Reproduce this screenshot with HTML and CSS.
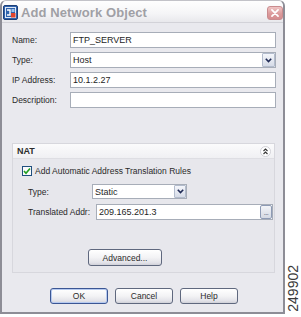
FILE: index.html
```html
<!DOCTYPE html>
<html>
<head>
<meta charset="utf-8">
<link rel="stylesheet" href="styles.css">
</head>
<body>
<div class="page">
  <div class="window">
    <div class="titlebar">
      <svg class="app-icon" width="15" height="15" viewBox="0 0 15 15">
        <rect x="0.5" y="0.5" width="14" height="14" rx="1.5" fill="#2f63ad" stroke="#1d3f78"/>
        <rect x="2.5" y="2.5" width="10" height="10" fill="none" stroke="#dfe8f6" stroke-width="1"/>
        <path d="M4 5h3v5H4" fill="none" stroke="#ffffff" stroke-width="1.4"/>
        <rect x="8" y="8" width="4.5" height="4.5" fill="#e0452f"/>
        <rect x="8.5" y="4" width="3" height="3" fill="#9cc3ee"/>
      </svg>
      <span class="title">Add Network Object</span>
      <span class="close">
        <svg width="16" height="14" viewBox="0 0 16 14">
          <path d="M4.5 3.5l7 7M11.5 3.5l-7 7" stroke="#ffffff" stroke-width="2" stroke-linecap="round"/>
        </svg>
      </span>
    </div>
    <div class="content">
      <div class="form">
        <span class="label">Name:</span>
        <div class="field">FTP_SERVER</div>
        <span class="label">Type:</span>
        <div class="field select">Host<span class="drop"><svg width="7" height="5" viewBox="0 0 7 5"><path d="M0.8 0.8L3.5 3.6L6.2 0.8" fill="none" stroke="#1f2a55" stroke-width="1.6"/></svg></span></div>
        <span class="label">IP Address:</span>
        <div class="field">10.1.2.27</div>
        <span class="label">Description:</span>
        <div class="field"></div>
      </div>
      <div class="nat">
        <div class="nat-head">
          <span class="nat-title">NAT</span>
          <span class="collapse">
            <svg width="11" height="11" viewBox="0 0 11 11">
              <circle cx="5.5" cy="5.5" r="5" fill="#ffffff" stroke="#d0d0d6"/>
              <path d="M3.5 5L5.5 3L7.5 5M3.5 8L5.5 6L7.5 8" fill="none" stroke="#333" stroke-width="1.1"/>
            </svg>
          </span>
        </div>
        <div class="nat-body">
          <div class="check-row">
            <span class="checkbox">
              <svg width="8" height="8" viewBox="0 0 8 8"><path d="M1 4l2 2.2L7 1.5" fill="none" stroke="#22a022" stroke-width="1.7"/></svg>
            </span>
            <span>Add Automatic Address Translation Rules</span>
          </div>
          <div class="nat-row type-row">
            <span class="label nat-label1">Type:</span>
            <div class="field select small">Static<span class="drop"><svg width="7" height="5" viewBox="0 0 7 5"><path d="M0.8 0.8L3.5 3.6L6.2 0.8" fill="none" stroke="#1f2a55" stroke-width="1.6"/></svg></span></div>
          </div>
          <div class="nat-row addr-row">
            <span class="label nat-label2">Translated Addr:</span>
            <div class="field addr">209.165.201.3<span class="ellipsis">...</span></div>
          </div>
          <div class="adv-row">
            <button class="btn adv">Advanced...</button>
          </div>
        </div>
      </div>
      <div class="buttons">
        <button class="btn default">OK</button>
        <button class="btn">Cancel</button>
        <button class="btn">Help</button>
      </div>
    </div>
  </div>
  <div class="fig-id">249902</div>
</div>
</body>
</html>
```

FILE: styles.css
```css
html, body {
  margin: 0;
  padding: 0;
  background: #ffffff;
}
body {
  font-family: "Liberation Sans", Arial, sans-serif;
  font-size: 8.5px;
  color: #2a2a2a;
}
.page {
  display: flex;
  align-items: flex-start;
  width: 301px;
  height: 317px;
}
.window {
  box-sizing: border-box;
  width: 285px;
  height: 314px;
  border: 2px solid #8d8d96;
  border-top: 1px solid #c2c2c8;
  border-radius: 6px 6px 0 0;
  background: #e9e9ee;
  display: flex;
  flex-direction: column;
}
.titlebar {
  height: 22px;
  display: flex;
  align-items: center;
  background: linear-gradient(#fefefe, #f5f5f7 60%, #e8e8ec);
  border-radius: 5px 5px 0 0;
  border-bottom: 1px solid #d2d2d8;
  box-sizing: border-box;
}
.app-icon {
  margin-left: 1px;
  margin-top: 1px;
  flex: none;
}
.title {
  margin-left: 3px;
  font-weight: bold;
  font-size: 13px;
  color: #a0a0a5;
  letter-spacing: 0.1px;
  flex: 1;
  margin-top: 1px;
}
.close {
  width: 16px;
  height: 14px;
  margin-top: 3px;
  box-sizing: border-box;
  border: 1px solid #c98b8e;
  border-radius: 3px;
  background: linear-gradient(#efc4c4, #dc9b9c 55%, #d58d8f);
  display: flex;
  align-items: center;
  justify-content: center;
}
.close svg {
  display: block;
}
.content {
  padding: 9px 7px 0 10px;
  display: flex;
  flex-direction: column;
}
.form {
  display: grid;
  grid-template-columns: 58px 1fr;
  grid-auto-rows: 16px;
  row-gap: 4px;
  align-items: center;
}
.label {
  font-size: 8.5px;
  color: #2a2a2a;
}
.field {
  box-sizing: border-box;
  height: 16px;
  background: #ffffff;
  border: 1px solid #a7adb8;
  font-size: 9px;
  color: #1e1e1e;
  padding-left: 2px;
  display: flex;
  align-items: center;
  position: relative;
}
.select .drop {
  position: absolute;
  right: 0px;
  top: 0px;
  width: 13px;
  height: 14px;
  box-sizing: border-box;
  border: 1px solid #b3bccd;
  border-radius: 1px;
  background: linear-gradient(#f4f6fb, #d6dbe7);
  display: flex;
  align-items: center;
  justify-content: center;
}
.drop svg {
  display: block;
}
.nat {
  margin-top: 35px;
  margin-right: 1px;
  border: 1px solid #d7d7dd;
  background: #e7e7ec;
  display: flex;
  flex-direction: column;
}
.nat-head {
  display: flex;
  align-items: center;
  justify-content: space-between;
  background: linear-gradient(#fbfbfc, #f0f0f3);
  border-bottom: 1px solid #dedee3;
  box-sizing: border-box;
  height: 15px;
}
.nat-title {
  font-weight: bold;
  font-size: 9px;
  margin-left: 4px;
  color: #2c2c2c;
}
.collapse {
  margin-right: 3px;
  display: flex;
}
.collapse svg {
  display: block;
}
.nat-body {
  padding: 6px 1px 6px 9px;
  display: flex;
  flex-direction: column;
}
.check-row {
  display: flex;
  align-items: center;
  gap: 2px;
  height: 11px;
  font-size: 8.5px;
}
.checkbox {
  box-sizing: border-box;
  width: 10px;
  height: 10px;
  background: #fbfbfb;
  border: 1px solid #1f4f7e;
  display: flex;
  align-items: center;
  justify-content: center;
  margin-right: 1px;
}
.checkbox svg {
  display: block;
}
.nat-row {
  display: flex;
  align-items: center;
  margin-left: 6px;
}
.type-row {
  margin-top: 8px;
}
.nat-label1 {
  width: 64px;
}
.nat-label2 {
  width: 68px;
}
.field.small {
  width: 95px;
  height: 15px;
}
.field.small .drop {
  height: 13px;
  width: 12px;
}
.addr-row {
  margin-top: 5px;
}
.field.addr {
  width: 177px;
}
.ellipsis {
  position: absolute;
  right: 0px;
  top: 0px;
  width: 12px;
  height: 14px;
  box-sizing: border-box;
  border: 1px solid #8e9bb5;
  border-radius: 2px;
  background: linear-gradient(#f3f4f8, #d5d9e3);
  font-size: 7px;
  color: #4a5470;
  line-height: 14px;
  text-align: center;
  letter-spacing: -0.5px;
}
.adv-row {
  margin-top: 29px;
  padding-left: 66px;
  display: flex;
}
.btn {
  font-family: "Liberation Sans", Arial, sans-serif;
  font-size: 8.5px;
  color: #2a2a2a;
  box-sizing: border-box;
  height: 16px;
  width: 58px;
  padding: 0;
  border: 1px solid #5f687e;
  border-radius: 3px;
  background: linear-gradient(#ffffff, #f3f3f5 50%, #e2e2e8 85%, #cfd0d8);
}
.btn.adv {
  width: 74px;
  height: 17px;
}
.btn.default {
  border-color: #3b5694;
  box-shadow: inset 0 0 0 1px #b6caf0;
}
.buttons {
  margin-top: 15px;
  margin-left: 38px;
  display: flex;
  gap: 7px;
}
.fig-id {
  align-self: flex-end;
  margin-bottom: 5px;
  margin-left: 2px;
  writing-mode: vertical-rl;
  transform: rotate(180deg);
  font-family: "Liberation Sans", Arial, sans-serif;
  font-size: 14px;
  color: #3a3a3a;
  line-height: 12px;
}
```
